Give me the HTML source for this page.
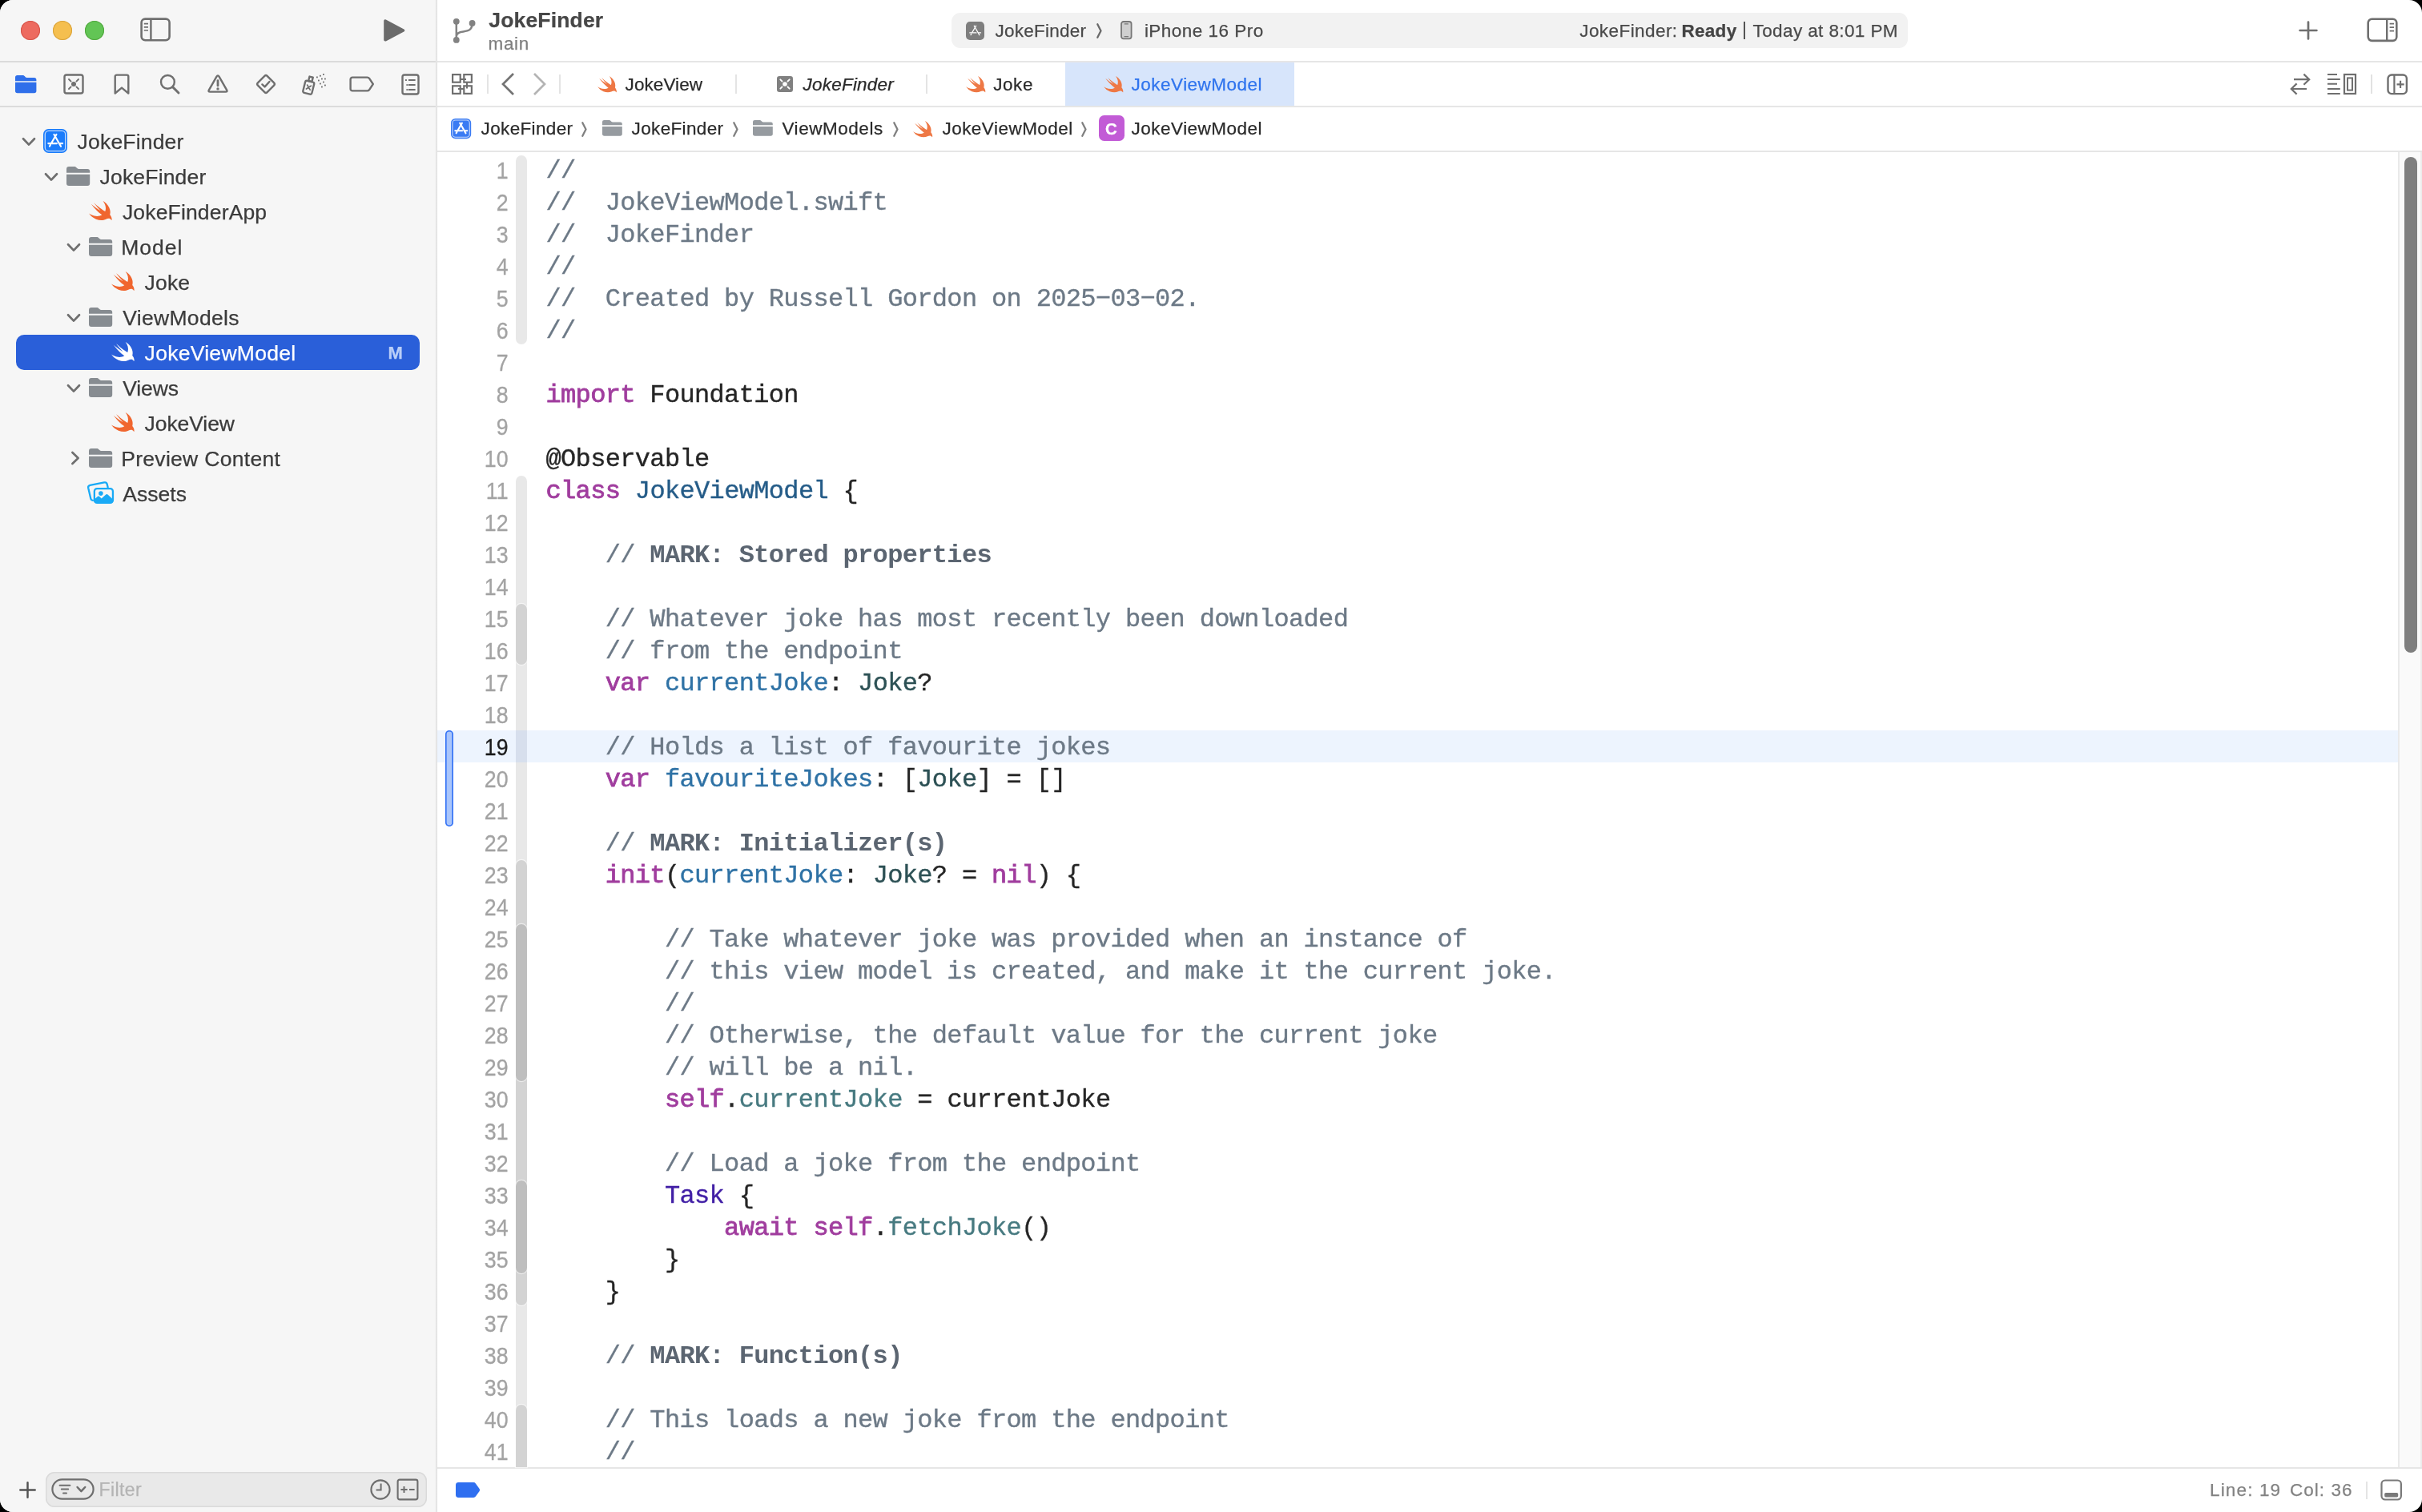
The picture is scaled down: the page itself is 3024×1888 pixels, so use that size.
<!DOCTYPE html><html lang="en"><head><meta charset="utf-8"><title>JokeFinder — JokeViewModel.swift</title><style>
html,body{margin:0;padding:0;background:#000;}
body{width:3024px;height:1888px;overflow:hidden;font-family:"Liberation Sans",sans-serif;}
#w{position:absolute;left:0;top:0;width:3024px;height:1888px;background:#fff;border-radius:16px;overflow:hidden;}
#L{position:absolute;left:0;top:0;width:3024px;height:1888px;will-change:transform;}
.r{position:absolute;}
.i{position:absolute;overflow:visible;}
.t{position:absolute;white-space:pre;font-family:"Liberation Sans",sans-serif;-webkit-text-stroke:0.25px;}
.code{position:absolute;left:681.5px;top:194px;font-family:"Liberation Mono",monospace;font-size:32px;line-height:40px;letter-spacing:-0.653px;color:#252525;white-space:pre;-webkit-text-stroke:0.35px;}
.code div{height:40px;}
.code .c{color:#6c7986;} .code .k{color:#a03d9e;-webkit-text-stroke:0.8px #a03d9e;} .code .m{color:#5b6571;font-weight:700;-webkit-text-stroke:0;}
.code .td{color:#255c88;} .code .d{color:#2f72a5;} .code .pt{color:#2d5155;} .code .pf{color:#477a80;} .code .ot{color:#4220a6;}
.ln{position:absolute;left:546px;top:192.9px;-webkit-text-stroke:0.3px;width:88.6px;text-align:right;font-family:"Liberation Sans",sans-serif;font-size:29px;line-height:40px;color:#a3a3a3;transform:scaleX(0.922);transform-origin:100% 50%;}
.ln div{height:40px;} .ln .cur{color:#1a1a1a;}
</style></head><body><div id="w"><div id="L"><div class="r" style="left:0px;top:0px;width:545px;height:1888px;background:#f6f6f6;"></div><div class="r" style="left:542.6px;top:0px;width:2.4px;height:1888px;background:linear-gradient(to right,#f6f6f6,#e8e8e8);"></div><div class="r" style="left:545px;top:0px;width:1px;height:1888px;background:#dedede;"></div><div class="r" style="left:0px;top:76px;width:543.8px;height:2px;background:#dbdbdb;"></div><div class="r" style="left:546px;top:76px;width:2478px;height:2px;background:#e6e6e6;"></div><div class="r" style="left:0px;top:132px;width:543.8px;height:2px;background:#dbdbdb;"></div><div class="r" style="left:546px;top:132px;width:2478px;height:2px;background:#e6e6e6;"></div><div class="r" style="left:546px;top:188px;width:2478px;height:2px;background:#e6e6e6;"></div><div class="r" style="left:546px;top:1832px;width:2478px;height:2px;background:#e6e6e6;"></div><div class="r" style="left:26px;top:26px;width:24px;height:24px;background:#ed6a5f;border-radius:50%;box-shadow:inset 0 0 0 1px #d5544a;"></div><div class="r" style="left:66px;top:26px;width:24px;height:24px;background:#f5bf4f;border-radius:50%;box-shadow:inset 0 0 0 1px #d9a33c;"></div><div class="r" style="left:106px;top:26px;width:24px;height:24px;background:#62c555;border-radius:50%;box-shadow:inset 0 0 0 1px #51a73f;"></div><svg class="i" style="left:174.00px;top:21.00px;width:40.00px;height:32.00px" viewBox="0 0 40 32" preserveAspectRatio="none" ><rect x="2.6" y="2.6" width="35" height="26.6" rx="4.6" fill="none" stroke="#6f6f6f" stroke-width="2.6"/><path d="M14.4,2.6 V29.2" stroke="#6f6f6f" stroke-width="2.4"/><path d="M5.8,8.7 H11 M5.8,12.8 H11 M5.8,17 H11" stroke="#6f6f6f" stroke-width="1.7"/></svg><svg class="i" style="left:478.00px;top:22.00px;width:30.00px;height:32.00px" viewBox="0 0 30 32" preserveAspectRatio="none" ><path d="M3,4.2 V27.8 L25.5,16 Z" fill="#6b6b6b" stroke="#6b6b6b" stroke-width="3.6" stroke-linejoin="round"/></svg><svg class="i" style="left:564.00px;top:20.00px;width:34.00px;height:36.00px" viewBox="0 0 34 36" preserveAspectRatio="none" ><g fill="#828282" stroke="none"><circle cx="5.8" cy="6.8" r="3.9"/><circle cx="25.6" cy="8.9" r="3.9"/><circle cx="5.8" cy="29.9" r="3.9"/></g><path d="M5.8,6.8 V29.9 M25.6,8.9 C25.6,17 21.5,18.6 14.5,19.4 C9,20 5.8,21.5 5.8,25.5" fill="none" stroke="#828282" stroke-width="2.5"/></svg><div class="t" style="left:610.33px;top:12.06px;font-size:26.5px;line-height:26.5px;letter-spacing:0.153px;color:#474747;font-weight:700;">JokeFinder</div><div class="t" style="left:609.50px;top:43.65px;font-size:22.5px;line-height:22.5px;letter-spacing:0.642px;color:#7f7f7f;">main</div><div class="r" style="left:1188px;top:16px;width:1194px;height:44px;background:#f2f2f2;border-radius:11px;"></div><svg class="i" style="left:1206.00px;top:26.80px;width:23.00px;height:23.00px" viewBox="0 0 30 30" preserveAspectRatio="none" ><rect x="0" y="0" width="30" height="30" rx="6.6" fill="#7e7e7e"/><g stroke="#fff" stroke-width="1.75" stroke-linecap="round" fill="none"><path d="M16.5,6.8 L10.2,17.6"/><path d="M13.4,6.8 L22,21.8"/><path d="M6.3,18.1 H16.9"/><path d="M20.7,18.1 H24.1"/><path d="M8.9,19.9 L7.9,21.7"/></g></svg><div class="t" style="left:1242.62px;top:27.85px;font-size:22.5px;line-height:22.5px;letter-spacing:0.244px;color:#4a4a4a;">JokeFinder</div><svg class="i" style="left:1368.60px;top:29.00px;width:7.00px;height:19.00px" viewBox="0 0 7 19" preserveAspectRatio="none" ><path d="M1.3,1.2 L5.5,9.5 L1.3,17.8" fill="none" stroke="#6a6a6a" stroke-width="2.3" stroke-linecap="round" stroke-linejoin="round"/></svg><svg class="i" style="left:1399.00px;top:26.40px;width:14.60px;height:23.40px" viewBox="0 0 14.6 23.4" preserveAspectRatio="none" ><rect x="1" y="1" width="12.6" height="21.4" rx="2.8" fill="#cfcfcf" stroke="#777" stroke-width="1.8"/><path d="M5.2,3.9 H9.4 M5,19.6 H9.6" stroke="#777" stroke-width="1.1" stroke-linecap="round"/></svg><div class="t" style="left:1428.90px;top:27.85px;font-size:22.5px;line-height:22.5px;letter-spacing:0.479px;color:#4a4a4a;">iPhone 16 Pro</div><div class="t" style="left:1972.22px;top:27.85px;font-size:22.5px;line-height:22.5px;letter-spacing:0.428px;color:#4a4a4a;">JokeFinder:</div><div class="t" style="left:2099.50px;top:27.85px;font-size:22.5px;line-height:22.5px;letter-spacing:0.281px;color:#444;font-weight:700;">Ready</div><div class="r" style="left:2177.1px;top:27.4px;width:1.9px;height:21.8px;background:#555;"></div><div class="t" style="left:2188.50px;top:27.85px;font-size:22.5px;line-height:22.5px;letter-spacing:0.397px;color:#4a4a4a;">Today at 8:01 PM</div><svg class="i" style="left:2868.00px;top:24.00px;width:28.00px;height:28.00px" viewBox="0 0 28 28" preserveAspectRatio="none" ><path d="M14,3.6 V24.4 M3.6,14 H24.4" stroke="#6f6f6f" stroke-width="2.7" stroke-linecap="round"/></svg><svg class="i" style="left:2953.60px;top:20.80px;width:41.00px;height:33.00px" viewBox="0 0 41 33" preserveAspectRatio="none" ><rect x="2.7" y="2.7" width="35.6" height="27.2" rx="4.8" fill="none" stroke="#6f6f6f" stroke-width="2.6"/><path d="M26.2,2.7 V29.9" stroke="#6f6f6f" stroke-width="2.4"/><path d="M29.6,8.7 H35 M29.6,13.2 H35 M29.6,17.6 H35" stroke="#6f6f6f" stroke-width="1.7"/></svg><svg class="i" style="left:18.80px;top:93.90px;width:26.40px;height:22.30px" viewBox="0 0 29 24" preserveAspectRatio="none" ><path fill="#2f6fea" d="M0,3 a3,3 0 0 1 3,-3 h7.2 c1.3,0 1.9,0.4 2.7,1.2 l1.1,1.1 c0.6,0.6 1.2,0.8 2.1,0.8 h9.9 a3,3 0 0 1 3,3 v1.6 h-29 z"/><path fill="#2f6fea" d="M0,9.3 h29 v11.7 a3,3 0 0 1 -3,3 h-23 a3,3 0 0 1 -3,-3 z"/></svg><svg class="i" style="left:78.00px;top:91.00px;width:28.00px;height:28.00px" viewBox="0 0 28 28" preserveAspectRatio="none" ><rect x="2.5" y="2.5" width="23" height="23" rx="2.6" fill="none" stroke="#6f6f6f" stroke-width="2.4" stroke-linejoin="round" stroke-linecap="round"/><circle cx="14" cy="14" r="3" fill="#6f6f6f"/><path d="M8,8 L10.6,10.6 M20,8 L17.4,10.6 M8,20 L10.6,17.4 M20,20 L17.4,17.4" stroke="#6f6f6f" stroke-width="1.9" stroke-linecap="round"/></svg><svg class="i" style="left:141.00px;top:91.00px;width:22.00px;height:28.00px" viewBox="0 0 22 28" preserveAspectRatio="none" ><path d="M2.7,4.6 a2,2 0 0 1 2,-2 H17.3 a2,2 0 0 1 2,2 V25.5 L11,18.6 L2.7,25.5 Z" fill="none" stroke="#6f6f6f" stroke-width="2.4" stroke-linejoin="round" stroke-linecap="round"/></svg><svg class="i" style="left:198.00px;top:91.00px;width:28.00px;height:28.00px" viewBox="0 0 28 28" preserveAspectRatio="none" ><circle cx="11.4" cy="11.4" r="8.4" fill="none" stroke="#6f6f6f" stroke-width="2.4" stroke-linejoin="round" stroke-linecap="round"/><path d="M17.6,17.6 L25,25" stroke="#6f6f6f" stroke-width="2.9" stroke-linecap="round"/></svg><svg class="i" style="left:258.00px;top:91.00px;width:28.00px;height:27.00px" viewBox="0 0 28 27" preserveAspectRatio="none" ><path d="M12.3,4.9 Q14,1.9 15.7,4.9 L25.1,21.3 Q26.4,23.6 23.7,23.6 H4.3 Q1.6,23.6 2.9,21.3 Z" fill="none" stroke="#6f6f6f" stroke-width="2.4" stroke-linejoin="round" stroke-linecap="round"/><path d="M14,9.6 V15.9" stroke="#6f6f6f" stroke-width="2.8" stroke-linecap="round"/><circle cx="14" cy="19.9" r="1.7" fill="#6f6f6f"/></svg><svg class="i" style="left:318.00px;top:91.00px;width:28.00px;height:28.00px" viewBox="0 0 28 28" preserveAspectRatio="none" ><path d="M12.4,3.9 Q14,2.3 15.6,3.9 L24.1,12.4 Q25.7,14 24.1,15.6 L15.6,24.1 Q14,25.7 12.4,24.1 L3.9,15.6 Q2.3,14 3.9,12.4 Z" fill="none" stroke="#6f6f6f" stroke-width="2.4" stroke-linejoin="round" stroke-linecap="round"/><path d="M9.4,14.4 L12.6,17.4 L18.4,11" fill="none" stroke="#6f6f6f" stroke-width="2.4" stroke-linejoin="round" stroke-linecap="round"/></svg><svg class="i" style="left:376.00px;top:91.00px;width:33.00px;height:29.00px" viewBox="0 0 33 29" preserveAspectRatio="none" ><g transform="rotate(14 9 18)"><rect x="3.6" y="10.5" width="11.4" height="15.4" rx="2" fill="none" stroke="#6f6f6f" stroke-width="2.4" stroke-linejoin="round" stroke-linecap="round"/><rect x="7.2" y="4.6" width="4.4" height="5.6" fill="none" stroke="#6f6f6f" stroke-width="2.4" stroke-linejoin="round" stroke-linecap="round" stroke-width="2"/><path d="M7,15.5 L11.8,20.5 M11.8,15.5 L7,20.5" stroke="#6f6f6f" stroke-width="1.8" stroke-linecap="round"/></g><g fill="#6f6f6f"><rect x="19" y="4.5" width="1.8" height="1.8"/><rect x="23" y="2.8" width="1.8" height="1.8"/><rect x="27" y="1" width="1.8" height="1.8"/><rect x="21" y="8.6" width="1.8" height="1.8"/><rect x="25" y="6.6" width="1.8" height="1.8"/><rect x="29" y="6.6" width="1.8" height="1.8"/><rect x="23" y="12.6" width="1.8" height="1.8"/><rect x="27" y="10.6" width="1.8" height="1.8"/><rect x="25" y="16.6" width="1.8" height="1.8"/><rect x="29" y="14.6" width="1.8" height="1.8"/></g></svg><svg class="i" style="left:435.00px;top:94.00px;width:34.00px;height:22.00px" viewBox="0 0 34 22" preserveAspectRatio="none" ><path d="M5,2.6 H23.6 a3,3 0 0 1 2.3,1.1 L30.8,11 L25.9,18.3 a3,3 0 0 1 -2.3,1.1 H5 a2.4,2.4 0 0 1 -2.4,-2.4 V5 A2.4,2.4 0 0 1 5,2.6 Z" fill="none" stroke="#6f6f6f" stroke-width="2.4" stroke-linejoin="round" stroke-linecap="round"/></svg><svg class="i" style="left:499.60px;top:90.60px;width:25.00px;height:29.00px" viewBox="0 0 25 29" preserveAspectRatio="none" ><rect x="2.5" y="2.5" width="20" height="24" rx="2.6" fill="none" stroke="#6f6f6f" stroke-width="2.4" stroke-linejoin="round" stroke-linecap="round"/><path d="M10,9 H18.6 M10,15 H18.6 M10,21 H18.6" stroke="#6f6f6f" stroke-width="2" stroke-linecap="butt"/><g fill="#6f6f6f"><rect x="6" y="8.1" width="1.9" height="1.9"/><rect x="7.4" y="14.1" width="1.9" height="1.9"/><rect x="7.4" y="20.1" width="1.9" height="1.9"/></g></svg><svg class="i" style="left:563.00px;top:91.00px;width:28.00px;height:28.00px" viewBox="0 0 28 28" preserveAspectRatio="none" ><rect x="2.1" y="2.1" width="9.6" height="9.6" fill="none" stroke="#6f6f6f" stroke-width="2.2"/><rect x="16.3" y="2.1" width="9.6" height="9.6" fill="none" stroke="#6f6f6f" stroke-width="2.2"/><rect x="2.1" y="16.3" width="9.6" height="9.6" fill="none" stroke="#6f6f6f" stroke-width="2.2"/><rect x="16.3" y="16.3" width="9.6" height="9.6" fill="none" stroke="#6f6f6f" stroke-width="2.2"/><path d="M11.7,8 H19 M20,11.7 V19.5 M9,20 H16.3" stroke="#6f6f6f" stroke-width="2"/></svg><div class="r" style="left:608px;top:93px;width:2px;height:24px;background:#e4e4e4;"></div><svg class="i" style="left:623.00px;top:89.00px;width:22.00px;height:32.00px" viewBox="0 0 22 32" preserveAspectRatio="none" ><path d="M18,3 L5,16 L18,29" fill="none" stroke="#737373" stroke-width="2.7" stroke-linecap="butt" stroke-linejoin="miter"/></svg><svg class="i" style="left:662.50px;top:89.00px;width:22.00px;height:32.00px" viewBox="0 0 22 32" preserveAspectRatio="none" ><path d="M4,3 L17,16 L4,29" fill="none" stroke="#b4b4b4" stroke-width="2.7" stroke-linecap="butt" stroke-linejoin="miter"/></svg><div class="r" style="left:698px;top:93px;width:2px;height:24px;background:#e4e4e4;"></div><svg class="i" style="left:746.00px;top:94.70px;width:24.00px;height:21.00px" viewBox="2.35 3.35 18.3 16.75" preserveAspectRatio="none" ><path d="M13.543 3.41c4.114 2.47 6.545 7.162 5.549 11.131-.024.093-.05.181-.076.272l.002.001c2.062 2.538 1.5 5.258 1.236 4.745-1.072-2.086-3.066-1.568-4.088-1.043a6.803 6.803 0 0 1-.281.158l-.02.012-.002.002c-2.115 1.123-4.957 1.205-7.812-.022a12.568 12.568 0 0 1-5.64-4.838c.649.48 1.35.902 2.097 1.252 3.019 1.414 6.051 1.311 8.197-.002C9.651 12.73 7.101 9.67 5.146 7.191a10.628 10.628 0 0 1-1.005-1.384c2.34 2.142 6.038 4.83 7.365 5.576C8.69 8.408 6.208 4.743 6.324 4.86c4.436 4.47 8.528 6.996 8.528 6.996.154.085.27.154.36.213.085-.215.16-.437.224-.668.708-2.588-.09-5.548-1.893-7.992z" fill="#ee7845"/></svg><div class="t" style="left:780.62px;top:94.95px;font-size:22.5px;line-height:22.5px;letter-spacing:0.071px;color:#2a2a2a;">JokeView</div><div class="r" style="left:917.6px;top:93px;width:2px;height:24px;background:#e4e4e4;"></div><svg class="i" style="left:970.00px;top:95.00px;width:20.00px;height:20.00px" viewBox="0 0 20 20" preserveAspectRatio="none" ><rect width="20" height="20" rx="3.2" fill="#808080"/><circle cx="10" cy="10" r="2.8" fill="#fff"/><path d="M4.3,4.3 L6.5,6.5 M15.7,4.3 L13.5,6.5 M4.3,15.7 L6.5,13.5 M15.7,15.7 L13.5,13.5" stroke="#fff" stroke-width="1.8" stroke-linecap="round"/></svg><div class="t" style="left:1002.50px;top:94.95px;font-size:22.5px;line-height:22.5px;letter-spacing:0.222px;color:#2a2a2a;font-style:italic;">JokeFinder</div><div class="r" style="left:1156px;top:93px;width:2px;height:24px;background:#e4e4e4;"></div><svg class="i" style="left:1206.00px;top:94.70px;width:24.50px;height:21.00px" viewBox="2.35 3.35 18.3 16.75" preserveAspectRatio="none" ><path d="M13.543 3.41c4.114 2.47 6.545 7.162 5.549 11.131-.024.093-.05.181-.076.272l.002.001c2.062 2.538 1.5 5.258 1.236 4.745-1.072-2.086-3.066-1.568-4.088-1.043a6.803 6.803 0 0 1-.281.158l-.02.012-.002.002c-2.115 1.123-4.957 1.205-7.812-.022a12.568 12.568 0 0 1-5.64-4.838c.649.48 1.35.902 2.097 1.252 3.019 1.414 6.051 1.311 8.197-.002C9.651 12.73 7.101 9.67 5.146 7.191a10.628 10.628 0 0 1-1.005-1.384c2.34 2.142 6.038 4.83 7.365 5.576C8.69 8.408 6.208 4.743 6.324 4.86c4.436 4.47 8.528 6.996 8.528 6.996.154.085.27.154.36.213.085-.215.16-.437.224-.668.708-2.588-.09-5.548-1.893-7.992z" fill="#ee7845"/></svg><div class="t" style="left:1240.22px;top:94.95px;font-size:22.5px;line-height:22.5px;letter-spacing:0.558px;color:#2a2a2a;">Joke</div><div class="r" style="left:1330px;top:78px;width:286px;height:54px;background:#d7e5fb;"></div><svg class="i" style="left:1378.00px;top:94.70px;width:24.50px;height:21.00px" viewBox="2.35 3.35 18.3 16.75" preserveAspectRatio="none" ><path d="M13.543 3.41c4.114 2.47 6.545 7.162 5.549 11.131-.024.093-.05.181-.076.272l.002.001c2.062 2.538 1.5 5.258 1.236 4.745-1.072-2.086-3.066-1.568-4.088-1.043a6.803 6.803 0 0 1-.281.158l-.02.012-.002.002c-2.115 1.123-4.957 1.205-7.812-.022a12.568 12.568 0 0 1-5.64-4.838c.649.48 1.35.902 2.097 1.252 3.019 1.414 6.051 1.311 8.197-.002C9.651 12.73 7.101 9.67 5.146 7.191a10.628 10.628 0 0 1-1.005-1.384c2.34 2.142 6.038 4.83 7.365 5.576C8.69 8.408 6.208 4.743 6.324 4.86c4.436 4.47 8.528 6.996 8.528 6.996.154.085.27.154.36.213.085-.215.16-.437.224-.668.708-2.588-.09-5.548-1.893-7.992z" fill="#ee7845"/></svg><div class="t" style="left:1412.62px;top:94.95px;font-size:22.5px;line-height:22.5px;letter-spacing:0.479px;color:#2f74ee;">JokeViewModel</div><svg class="i" style="left:2858.00px;top:90.00px;width:28.00px;height:30.00px" viewBox="0 0 28 30" preserveAspectRatio="none" ><path d="M6,9.2 H25 M18.4,2.6 L25.2,9.2 L18.4,15.8 M22,21 H3 M9.6,14.4 L2.8,21 L9.6,27.6" fill="none" stroke="#6f6f6f" stroke-width="2.2" stroke-linecap="butt" stroke-linejoin="miter"/></svg><svg class="i" style="left:2905.00px;top:91.00px;width:38.00px;height:28.00px" viewBox="0 0 38 28" preserveAspectRatio="none" ><path d="M1,2 H13 M1,7.9 H16.8 M1,13.8 H13 M1,19.9 H16.8 M1,26 H16.8" stroke="#6f6f6f" stroke-width="2"/><rect x="22" y="2" width="14" height="24" fill="none" stroke="#6f6f6f" stroke-width="2.2"/><rect x="26" y="6.4" width="6" height="15.2" fill="none" stroke="#6f6f6f" stroke-width="2"/></svg><div class="r" style="left:2960px;top:93px;width:2px;height:24px;background:#e2e2e2;"></div><svg class="i" style="left:2978.60px;top:90.60px;width:28.40px;height:28.60px" viewBox="0 0 28.4 28.6" preserveAspectRatio="none" ><rect x="2.5" y="2.5" width="23.4" height="23.6" rx="4.6" fill="none" stroke="#6f6f6f" stroke-width="2.4"/><path d="M10.4,2.5 V26.1" stroke="#6f6f6f" stroke-width="2.2"/><path d="M18.1,9.8 V19 M13.5,14.4 H22.7" stroke="#6f6f6f" stroke-width="2.1"/></svg><svg class="i" style="left:563.20px;top:147.80px;width:25.20px;height:25.20px" viewBox="0 0 30 30" preserveAspectRatio="none" ><rect x="0" y="0" width="30" height="30" rx="6.6" fill="#3a7bf3"/><rect x="2.3" y="2.3" width="25.4" height="25.4" rx="4.5" fill="none" stroke="#fff" stroke-opacity=".72" stroke-width="1.3"/><g stroke="#fff" stroke-width="2.5" stroke-linecap="round" fill="none"><path d="M16.5,6.8 L10.2,17.6"/><path d="M13.4,6.8 L22,21.8"/><path d="M6.3,18.1 H16.9"/><path d="M20.7,18.1 H24.1"/><path d="M8.9,19.9 L7.9,21.7"/></g></svg><div class="t" style="left:600.62px;top:150.45px;font-size:22.5px;line-height:22.5px;letter-spacing:0.344px;color:#2a2a2a;">JokeFinder</div><svg class="i" style="left:726.00px;top:152.00px;width:7.00px;height:19.00px" viewBox="0 0 7 19" preserveAspectRatio="none" ><path d="M1.3,1.2 L5.5,9.5 L1.3,17.8" fill="none" stroke="#808080" stroke-width="2.3" stroke-linecap="round" stroke-linejoin="round"/></svg><svg class="i" style="left:751.80px;top:150.00px;width:24.80px;height:19.80px" viewBox="0 0 29 24" preserveAspectRatio="none" ><path fill="#969ba0" d="M0,3 a3,3 0 0 1 3,-3 h6.6 c1.3,0 1.9,0.4 2.7,1.2 l0.9,0.9 c0.6,0.6 1.2,0.8 2.1,0.8 h10.7 a3,3 0 0 1 3,3 v1.8 h-29 z"/><path fill="#969ba0" d="M0,9.8 h29 v11.2 a3,3 0 0 1 -3,3 h-23 a3,3 0 0 1 -3,-3 z"/></svg><div class="t" style="left:788.62px;top:150.45px;font-size:22.5px;line-height:22.5px;letter-spacing:0.344px;color:#2a2a2a;">JokeFinder</div><svg class="i" style="left:915.00px;top:152.00px;width:7.00px;height:19.00px" viewBox="0 0 7 19" preserveAspectRatio="none" ><path d="M1.3,1.2 L5.5,9.5 L1.3,17.8" fill="none" stroke="#808080" stroke-width="2.3" stroke-linecap="round" stroke-linejoin="round"/></svg><svg class="i" style="left:940.00px;top:150.00px;width:24.80px;height:19.80px" viewBox="0 0 29 24" preserveAspectRatio="none" ><path fill="#969ba0" d="M0,3 a3,3 0 0 1 3,-3 h6.6 c1.3,0 1.9,0.4 2.7,1.2 l0.9,0.9 c0.6,0.6 1.2,0.8 2.1,0.8 h10.7 a3,3 0 0 1 3,3 v1.8 h-29 z"/><path fill="#969ba0" d="M0,9.8 h29 v11.2 a3,3 0 0 1 -3,3 h-23 a3,3 0 0 1 -3,-3 z"/></svg><div class="t" style="left:976.48px;top:150.45px;font-size:22.5px;line-height:22.5px;letter-spacing:0.533px;color:#2a2a2a;">ViewModels</div><svg class="i" style="left:1114.60px;top:152.00px;width:7.00px;height:19.00px" viewBox="0 0 7 19" preserveAspectRatio="none" ><path d="M1.3,1.2 L5.5,9.5 L1.3,17.8" fill="none" stroke="#808080" stroke-width="2.3" stroke-linecap="round" stroke-linejoin="round"/></svg><svg class="i" style="left:1140.00px;top:150.60px;width:24.40px;height:21.00px" viewBox="2.35 3.35 18.3 16.75" preserveAspectRatio="none" ><path d="M13.543 3.41c4.114 2.47 6.545 7.162 5.549 11.131-.024.093-.05.181-.076.272l.002.001c2.062 2.538 1.5 5.258 1.236 4.745-1.072-2.086-3.066-1.568-4.088-1.043a6.803 6.803 0 0 1-.281.158l-.02.012-.002.002c-2.115 1.123-4.957 1.205-7.812-.022a12.568 12.568 0 0 1-5.64-4.838c.649.48 1.35.902 2.097 1.252 3.019 1.414 6.051 1.311 8.197-.002C9.651 12.73 7.101 9.67 5.146 7.191a10.628 10.628 0 0 1-1.005-1.384c2.34 2.142 6.038 4.83 7.365 5.576C8.69 8.408 6.208 4.743 6.324 4.86c4.436 4.47 8.528 6.996 8.528 6.996.154.085.27.154.36.213.085-.215.16-.437.224-.668.708-2.588-.09-5.548-1.893-7.992z" fill="#ee7845"/></svg><div class="t" style="left:1176.42px;top:150.45px;font-size:22.5px;line-height:22.5px;letter-spacing:0.479px;color:#2a2a2a;">JokeViewModel</div><svg class="i" style="left:1350.00px;top:152.00px;width:7.00px;height:19.00px" viewBox="0 0 7 19" preserveAspectRatio="none" ><path d="M1.3,1.2 L5.5,9.5 L1.3,17.8" fill="none" stroke="#808080" stroke-width="2.3" stroke-linecap="round" stroke-linejoin="round"/></svg><div class="r" style="left:1372px;top:144px;width:32px;height:32px;background:#c25bd6;border-radius:6.5px;"></div><div class="t" style="left:1380.12px;top:151.34px;font-size:20.5px;line-height:20.5px;letter-spacing:0.000px;color:#fff;font-weight:700;">C</div><div class="t" style="left:1412.62px;top:150.45px;font-size:22.5px;line-height:22.5px;letter-spacing:0.479px;color:#2a2a2a;">JokeViewModel</div><div class="r" style="left:20px;top:418px;width:504px;height:44px;background:#2a5fd9;border-radius:10px;"></div><svg class="i" style="left:27.00px;top:169.80px;width:18.00px;height:14.00px" viewBox="0 0 18 14" preserveAspectRatio="none" ><path d="M2,3.2 L9,10.6 L16,3.2" fill="none" stroke="#6f6f6f" stroke-width="2.7" stroke-linecap="round" stroke-linejoin="round"/></svg><svg class="i" style="left:54.00px;top:161.00px;width:30.00px;height:30.00px" viewBox="0 0 30 30" preserveAspectRatio="none" ><rect x="0" y="0" width="30" height="30" rx="6.6" fill="#1b7cfb"/><rect x="2.3" y="2.3" width="25.4" height="25.4" rx="4.5" fill="none" stroke="#fff" stroke-opacity=".72" stroke-width="1.3"/><g stroke="#fff" stroke-width="2.1" stroke-linecap="round" fill="none"><path d="M16.5,6.8 L10.2,17.6"/><path d="M13.4,6.8 L22,21.8"/><path d="M6.3,18.1 H16.9"/><path d="M20.7,18.1 H24.1"/><path d="M8.9,19.9 L7.9,21.7"/></g></svg><div class="t" style="left:96.62px;top:164.16px;font-size:26.5px;line-height:26.5px;letter-spacing:0.183px;color:#3b3b3b;">JokeFinder</div><svg class="i" style="left:55.20px;top:213.60px;width:18.00px;height:14.00px" viewBox="0 0 18 14" preserveAspectRatio="none" ><path d="M2,3.2 L9,10.6 L16,3.2" fill="none" stroke="#6f6f6f" stroke-width="2.7" stroke-linecap="round" stroke-linejoin="round"/></svg><svg class="i" style="left:83.00px;top:208.00px;width:29.20px;height:24.00px" viewBox="0 0 29 24" preserveAspectRatio="none" ><path fill="#878c91" d="M0,3 a3,3 0 0 1 3,-3 h6.6 c1.3,0 1.9,0.4 2.7,1.2 l0.9,0.9 c0.6,0.6 1.2,0.8 2.1,0.8 h10.7 a3,3 0 0 1 3,3 v1.8 h-29 z"/><path fill="#878c91" d="M0,9.8 h29 v11.2 a3,3 0 0 1 -3,3 h-23 a3,3 0 0 1 -3,-3 z"/></svg><div class="t" style="left:124.62px;top:208.16px;font-size:26.5px;line-height:26.5px;letter-spacing:0.172px;color:#3b3b3b;">JokeFinder</div><svg class="i" style="left:111.30px;top:251.00px;width:28.80px;height:24.80px" viewBox="2.35 3.35 18.3 16.75" preserveAspectRatio="none" ><path d="M13.543 3.41c4.114 2.47 6.545 7.162 5.549 11.131-.024.093-.05.181-.076.272l.002.001c2.062 2.538 1.5 5.258 1.236 4.745-1.072-2.086-3.066-1.568-4.088-1.043a6.803 6.803 0 0 1-.281.158l-.02.012-.002.002c-2.115 1.123-4.957 1.205-7.812-.022a12.568 12.568 0 0 1-5.64-4.838c.649.48 1.35.902 2.097 1.252 3.019 1.414 6.051 1.311 8.197-.002C9.651 12.73 7.101 9.67 5.146 7.191a10.628 10.628 0 0 1-1.005-1.384c2.34 2.142 6.038 4.83 7.365 5.576C8.69 8.408 6.208 4.743 6.324 4.86c4.436 4.47 8.528 6.996 8.528 6.996.154.085.27.154.36.213.085-.215.16-.437.224-.668.708-2.588-.09-5.548-1.893-7.992z" fill="#f0662f"/></svg><div class="t" style="left:152.93px;top:252.16px;font-size:26.5px;line-height:26.5px;letter-spacing:0.162px;color:#3b3b3b;">JokeFinderApp</div><svg class="i" style="left:83.20px;top:301.60px;width:18.00px;height:14.00px" viewBox="0 0 18 14" preserveAspectRatio="none" ><path d="M2,3.2 L9,10.6 L16,3.2" fill="none" stroke="#6f6f6f" stroke-width="2.7" stroke-linecap="round" stroke-linejoin="round"/></svg><svg class="i" style="left:110.80px;top:296.00px;width:29.20px;height:24.00px" viewBox="0 0 29 24" preserveAspectRatio="none" ><path fill="#878c91" d="M0,3 a3,3 0 0 1 3,-3 h6.6 c1.3,0 1.9,0.4 2.7,1.2 l0.9,0.9 c0.6,0.6 1.2,0.8 2.1,0.8 h10.7 a3,3 0 0 1 3,3 v1.8 h-29 z"/><path fill="#878c91" d="M0,9.8 h29 v11.2 a3,3 0 0 1 -3,3 h-23 a3,3 0 0 1 -3,-3 z"/></svg><div class="t" style="left:151.18px;top:296.16px;font-size:26.5px;line-height:26.5px;letter-spacing:0.987px;color:#3b3b3b;">Model</div><svg class="i" style="left:139.00px;top:339.00px;width:28.80px;height:24.80px" viewBox="2.35 3.35 18.3 16.75" preserveAspectRatio="none" ><path d="M13.543 3.41c4.114 2.47 6.545 7.162 5.549 11.131-.024.093-.05.181-.076.272l.002.001c2.062 2.538 1.5 5.258 1.236 4.745-1.072-2.086-3.066-1.568-4.088-1.043a6.803 6.803 0 0 1-.281.158l-.02.012-.002.002c-2.115 1.123-4.957 1.205-7.812-.022a12.568 12.568 0 0 1-5.64-4.838c.649.48 1.35.902 2.097 1.252 3.019 1.414 6.051 1.311 8.197-.002C9.651 12.73 7.101 9.67 5.146 7.191a10.628 10.628 0 0 1-1.005-1.384c2.34 2.142 6.038 4.83 7.365 5.576C8.69 8.408 6.208 4.743 6.324 4.86c4.436 4.47 8.528 6.996 8.528 6.996.154.085.27.154.36.213.085-.215.16-.437.224-.668.708-2.588-.09-5.548-1.893-7.992z" fill="#f0662f"/></svg><div class="t" style="left:180.62px;top:340.16px;font-size:26.5px;line-height:26.5px;letter-spacing:0.167px;color:#3b3b3b;">Joke</div><svg class="i" style="left:83.20px;top:389.60px;width:18.00px;height:14.00px" viewBox="0 0 18 14" preserveAspectRatio="none" ><path d="M2,3.2 L9,10.6 L16,3.2" fill="none" stroke="#6f6f6f" stroke-width="2.7" stroke-linecap="round" stroke-linejoin="round"/></svg><svg class="i" style="left:110.80px;top:384.00px;width:29.20px;height:24.00px" viewBox="0 0 29 24" preserveAspectRatio="none" ><path fill="#878c91" d="M0,3 a3,3 0 0 1 3,-3 h6.6 c1.3,0 1.9,0.4 2.7,1.2 l0.9,0.9 c0.6,0.6 1.2,0.8 2.1,0.8 h10.7 a3,3 0 0 1 3,3 v1.8 h-29 z"/><path fill="#878c91" d="M0,9.8 h29 v11.2 a3,3 0 0 1 -3,3 h-23 a3,3 0 0 1 -3,-3 z"/></svg><div class="t" style="left:153.18px;top:384.16px;font-size:26.5px;line-height:26.5px;letter-spacing:0.328px;color:#3b3b3b;">ViewModels</div><svg class="i" style="left:139.00px;top:427.00px;width:28.80px;height:24.80px" viewBox="2.35 3.35 18.3 16.75" preserveAspectRatio="none" ><path d="M13.543 3.41c4.114 2.47 6.545 7.162 5.549 11.131-.024.093-.05.181-.076.272l.002.001c2.062 2.538 1.5 5.258 1.236 4.745-1.072-2.086-3.066-1.568-4.088-1.043a6.803 6.803 0 0 1-.281.158l-.02.012-.002.002c-2.115 1.123-4.957 1.205-7.812-.022a12.568 12.568 0 0 1-5.64-4.838c.649.48 1.35.902 2.097 1.252 3.019 1.414 6.051 1.311 8.197-.002C9.651 12.73 7.101 9.67 5.146 7.191a10.628 10.628 0 0 1-1.005-1.384c2.34 2.142 6.038 4.83 7.365 5.576C8.69 8.408 6.208 4.743 6.324 4.86c4.436 4.47 8.528 6.996 8.528 6.996.154.085.27.154.36.213.085-.215.16-.437.224-.668.708-2.588-.09-5.548-1.893-7.992z" fill="#ffffff"/></svg><div class="t" style="left:180.62px;top:428.16px;font-size:26.5px;line-height:26.5px;letter-spacing:0.283px;color:#ffffff;">JokeViewModel</div><div class="t" style="left:484.50px;top:429.77px;font-size:22px;line-height:22px;letter-spacing:0.000px;color:#b9cef8;font-weight:700;">M</div><svg class="i" style="left:83.20px;top:477.60px;width:18.00px;height:14.00px" viewBox="0 0 18 14" preserveAspectRatio="none" ><path d="M2,3.2 L9,10.6 L16,3.2" fill="none" stroke="#6f6f6f" stroke-width="2.7" stroke-linecap="round" stroke-linejoin="round"/></svg><svg class="i" style="left:110.80px;top:472.00px;width:29.20px;height:24.00px" viewBox="0 0 29 24" preserveAspectRatio="none" ><path fill="#878c91" d="M0,3 a3,3 0 0 1 3,-3 h6.6 c1.3,0 1.9,0.4 2.7,1.2 l0.9,0.9 c0.6,0.6 1.2,0.8 2.1,0.8 h10.7 a3,3 0 0 1 3,3 v1.8 h-29 z"/><path fill="#878c91" d="M0,9.8 h29 v11.2 a3,3 0 0 1 -3,3 h-23 a3,3 0 0 1 -3,-3 z"/></svg><div class="t" style="left:153.18px;top:472.16px;font-size:26.5px;line-height:26.5px;letter-spacing:-0.106px;color:#3b3b3b;">Views</div><svg class="i" style="left:139.00px;top:515.00px;width:28.80px;height:24.80px" viewBox="2.35 3.35 18.3 16.75" preserveAspectRatio="none" ><path d="M13.543 3.41c4.114 2.47 6.545 7.162 5.549 11.131-.024.093-.05.181-.076.272l.002.001c2.062 2.538 1.5 5.258 1.236 4.745-1.072-2.086-3.066-1.568-4.088-1.043a6.803 6.803 0 0 1-.281.158l-.02.012-.002.002c-2.115 1.123-4.957 1.205-7.812-.022a12.568 12.568 0 0 1-5.64-4.838c.649.48 1.35.902 2.097 1.252 3.019 1.414 6.051 1.311 8.197-.002C9.651 12.73 7.101 9.67 5.146 7.191a10.628 10.628 0 0 1-1.005-1.384c2.34 2.142 6.038 4.83 7.365 5.576C8.69 8.408 6.208 4.743 6.324 4.86c4.436 4.47 8.528 6.996 8.528 6.996.154.085.27.154.36.213.085-.215.16-.437.224-.668.708-2.588-.09-5.548-1.893-7.992z" fill="#f0662f"/></svg><div class="t" style="left:180.62px;top:516.16px;font-size:26.5px;line-height:26.5px;letter-spacing:-0.089px;color:#3b3b3b;">JokeView</div><svg class="i" style="left:87.00px;top:563.00px;width:14.00px;height:18.00px" viewBox="0 0 14 18" preserveAspectRatio="none" ><path d="M3.4,2 L10.6,9 L3.4,16" fill="none" stroke="#6f6f6f" stroke-width="2.7" stroke-linecap="round" stroke-linejoin="round"/></svg><svg class="i" style="left:110.80px;top:560.00px;width:29.20px;height:24.00px" viewBox="0 0 29 24" preserveAspectRatio="none" ><path fill="#878c91" d="M0,3 a3,3 0 0 1 3,-3 h6.6 c1.3,0 1.9,0.4 2.7,1.2 l0.9,0.9 c0.6,0.6 1.2,0.8 2.1,0.8 h10.7 a3,3 0 0 1 3,3 v1.8 h-29 z"/><path fill="#878c91" d="M0,9.8 h29 v11.2 a3,3 0 0 1 -3,3 h-23 a3,3 0 0 1 -3,-3 z"/></svg><div class="t" style="left:151.18px;top:560.16px;font-size:26.5px;line-height:26.5px;letter-spacing:0.305px;color:#3b3b3b;">Preview Content</div><svg class="i" style="left:109.00px;top:601.00px;width:34.00px;height:29.00px" viewBox="0 0 34 29" preserveAspectRatio="none" ><path d="M25.8,8 L24.7,3.6 a3,3 0 0 0 -3.5,-2.2 L3.5,4.8 a3,3 0 0 0 -2.3,3.5 L4.3,21.5 a3,3 0 0 0 3.5,2.4" fill="none" stroke="#19aaf6" stroke-width="2.3" stroke-linecap="butt"/><rect x="8.85" y="9.15" width="23.1" height="17.7" rx="3.3" fill="none" stroke="#19aaf6" stroke-width="2.3"/><circle cx="16.9" cy="15.1" r="2.8" fill="#19aaf6"/><path d="M8.85,22.5 L13.1,18.8 a1.4,1.4 0 0 1 1.8,0 L17.7,21.5 L23.2,16.6 a1.7,1.7 0 0 1 2.3,0 L31.95,22.6 V24 a3,3 0 0 1 -3,3 H11.85 a3,3 0 0 1 -3,-3 Z" fill="#19aaf6"/></svg><div class="t" style="left:153.18px;top:604.16px;font-size:26.5px;line-height:26.5px;letter-spacing:0.065px;color:#3b3b3b;">Assets</div><div class="r" style="left:546px;top:912px;width:2448px;height:40px;background:#edf4fe;"></div><div class="r" style="left:644px;top:194px;width:14px;height:235.5px;background:#e8e8e8;border-radius:7px;"></div><div class="r" style="left:644px;top:594px;width:14px;height:1238px;background:#e8e8e8;border-radius:7px 7px 0 0;"></div><div class="r" style="left:644px;top:754px;width:14px;height:75.5px;background:#d3d3d3;border-radius:7px;box-shadow:0 0 0 1.2px rgba(255,255,255,.55);"></div><div class="r" style="left:644px;top:1074px;width:14px;height:555.5px;background:#d3d3d3;border-radius:7px;box-shadow:0 0 0 1.2px rgba(255,255,255,.55);"></div><div class="r" style="left:644px;top:1154px;width:14px;height:195.5px;background:#bebebe;border-radius:7px;box-shadow:0 0 0 1.2px rgba(255,255,255,.55);"></div><div class="r" style="left:644px;top:1474px;width:14px;height:115.5px;background:#bebebe;border-radius:7px;box-shadow:0 0 0 1.2px rgba(255,255,255,.55);"></div><div class="r" style="left:644px;top:1754px;width:14px;height:78px;background:#d3d3d3;border-radius:7px 7px 0 0;box-shadow:0 0 0 1.2px rgba(255,255,255,.55);"></div><div class="r" style="left:644px;top:912px;width:14px;height:40px;background:rgba(200,215,240,.55);"></div><div class="r" style="left:556px;top:912px;width:10px;height:120px;background:#a9c5fb;border-radius:5px;box-shadow:inset 0 0 0 1.6px #2f6ff5;"></div><div class="ln"><div>1</div><div>2</div><div>3</div><div>4</div><div>5</div><div>6</div><div>7</div><div>8</div><div>9</div><div>10</div><div>11</div><div>12</div><div>13</div><div>14</div><div>15</div><div>16</div><div>17</div><div>18</div><div class="cur">19</div><div>20</div><div>21</div><div>22</div><div>23</div><div>24</div><div>25</div><div>26</div><div>27</div><div>28</div><div>29</div><div>30</div><div>31</div><div>32</div><div>33</div><div>34</div><div>35</div><div>36</div><div>37</div><div>38</div><div>39</div><div>40</div><div>41</div></div><div class="code"><div><span class="c">//</span></div><div><span class="c">//  JokeViewModel.swift</span></div><div><span class="c">//  JokeFinder</span></div><div><span class="c">//</span></div><div><span class="c">//  Created by Russell Gordon on 2025−03−02.</span></div><div><span class="c">//</span></div><div>&nbsp;</div><div><span class="k">import</span> Foundation</div><div>&nbsp;</div><div>@Observable</div><div><span class="k">class</span> <span class="td">JokeViewModel</span> {</div><div>&nbsp;</div><div><span class="c">    // </span><span class="m">MARK: Stored properties</span></div><div>&nbsp;</div><div><span class="c">    // Whatever joke has most recently been downloaded</span></div><div><span class="c">    // from the endpoint</span></div><div>    <span class="k">var</span> <span class="d">currentJoke</span>: <span class="pt">Joke</span>?</div><div>&nbsp;</div><div><span class="c">    // Holds a list of favourite jokes</span></div><div>    <span class="k">var</span> <span class="d">favouriteJokes</span>: [<span class="pt">Joke</span>] = []</div><div>&nbsp;</div><div><span class="c">    // </span><span class="m">MARK: Initializer(s)</span></div><div>    <span class="k">init</span>(<span class="d">currentJoke</span>: <span class="pt">Joke</span>? = <span class="k">nil</span>) {</div><div>&nbsp;</div><div><span class="c">        // Take whatever joke was provided when an instance of</span></div><div><span class="c">        // this view model is created, and make it the current joke.</span></div><div><span class="c">        //</span></div><div><span class="c">        // Otherwise, the default value for the current joke</span></div><div><span class="c">        // will be a nil.</span></div><div>        <span class="k">self</span>.<span class="pf">currentJoke</span> = currentJoke</div><div>&nbsp;</div><div><span class="c">        // Load a joke from the endpoint</span></div><div>        <span class="ot">Task</span> {</div><div>            <span class="k">await</span> <span class="k">self</span>.<span class="pf">fetchJoke</span>()</div><div>        }</div><div>    }</div><div>&nbsp;</div><div><span class="c">    // </span><span class="m">MARK: Function(s)</span></div><div>&nbsp;</div><div><span class="c">    // This loads a new joke from the endpoint</span></div><div><span class="c">    //</span></div></div><svg class="i" style="left:22.00px;top:1848.00px;width:26.00px;height:26.00px" viewBox="0 0 26 26" preserveAspectRatio="none" ><path d="M12.5,3.3 V21.7 M3.3,12.5 H21.7" stroke="#555" stroke-width="2.5" stroke-linecap="round"/></svg><div class="r" style="left:56.5px;top:1838.4px;width:476.8px;height:43.4px;background:#e9e9e9;border-radius:11px;box-shadow:inset 0 0 0 1.5px #dadada;"></div><svg class="i" style="left:64.00px;top:1846.40px;width:54.00px;height:27.00px" viewBox="0 0 54 27" preserveAspectRatio="none" ><rect x="1.4" y="1.4" width="51.2" height="24.2" rx="12.1" fill="none" stroke="#6e6e6e" stroke-width="2.2"/><path d="M10.6,8.8 H23.4 M12.8,13.6 H21.2 M15,18.4 H19" stroke="#6e6e6e" stroke-width="2" stroke-linecap="round"/><path d="M32.6,11 L37.4,16.2 L42.2,11" fill="none" stroke="#6e6e6e" stroke-width="2.5" stroke-linecap="round" stroke-linejoin="round"/></svg><div class="t" style="left:123.53px;top:1848.83px;font-size:23px;line-height:23px;letter-spacing:0.425px;color:#b4b4b4;">Filter</div><svg class="i" style="left:461.00px;top:1846.40px;width:28.00px;height:28.00px" viewBox="0 0 28 28" preserveAspectRatio="none" ><circle cx="14" cy="14" r="11.6" fill="none" stroke="#6e6e6e" stroke-width="2.1"/><path d="M14.6,6.4 V14.4 H8.6" fill="none" stroke="#6e6e6e" stroke-width="2"/></svg><svg class="i" style="left:495.00px;top:1846.40px;width:28.00px;height:28.00px" viewBox="0 0 28 28" preserveAspectRatio="none" ><rect x="1.6" y="1.6" width="24.8" height="24.8" rx="2.4" fill="none" stroke="#6e6e6e" stroke-width="2.1"/><path d="M5.4,14 H13.6 M9.5,9.9 V18.1 M16,14 H22.6" stroke="#6e6e6e" stroke-width="2"/></svg><svg class="i" style="left:569.00px;top:1851.40px;width:30.00px;height:19.00px" viewBox="0 0 30 19" preserveAspectRatio="none" ><path d="M3.4,0 H22.2 a3.4,3.4 0 0 1 2.7,1.4 L29.6,8 a2.6,2.6 0 0 1 0,3 L24.9,17.6 a3.4,3.4 0 0 1 -2.7,1.4 H3.4 A3.4,3.4 0 0 1 0,15.6 V3.4 A3.4,3.4 0 0 1 3.4,0 Z" fill="#2f6ff0"/></svg><div class="t" style="left:2759.12px;top:1850.05px;font-size:22.5px;line-height:22.5px;letter-spacing:1.125px;color:#828282;">Line: 19</div><div class="t" style="left:2858.88px;top:1850.05px;font-size:22.5px;line-height:22.5px;letter-spacing:1.062px;color:#828282;">Col: 36</div><div class="r" style="left:2954px;top:1850px;width:2px;height:22px;background:#e4e4e4;"></div><svg class="i" style="left:2972.40px;top:1847.00px;width:27.40px;height:27.00px" viewBox="0 0 27.4 27" preserveAspectRatio="none" ><rect x="1.5" y="1.5" width="24.4" height="24" rx="4.4" fill="none" stroke="#7a7a7a" stroke-width="2.2"/><rect x="5.2" y="17" width="17" height="5.4" rx="1.6" fill="#7a7a7a"/></svg><div class="r" style="left:2994px;top:190px;width:30px;height:1642px;background:#fafafa;"></div><div class="r" style="left:2994px;top:190px;width:2px;height:1642px;background:#e9e9e9;"></div><div class="r" style="left:3022px;top:190px;width:2px;height:1642px;background:#ececec;"></div><div class="r" style="left:3002px;top:196px;width:16px;height:619px;background:#7f7f7f;border-radius:8px;"></div></div></div></body></html>
